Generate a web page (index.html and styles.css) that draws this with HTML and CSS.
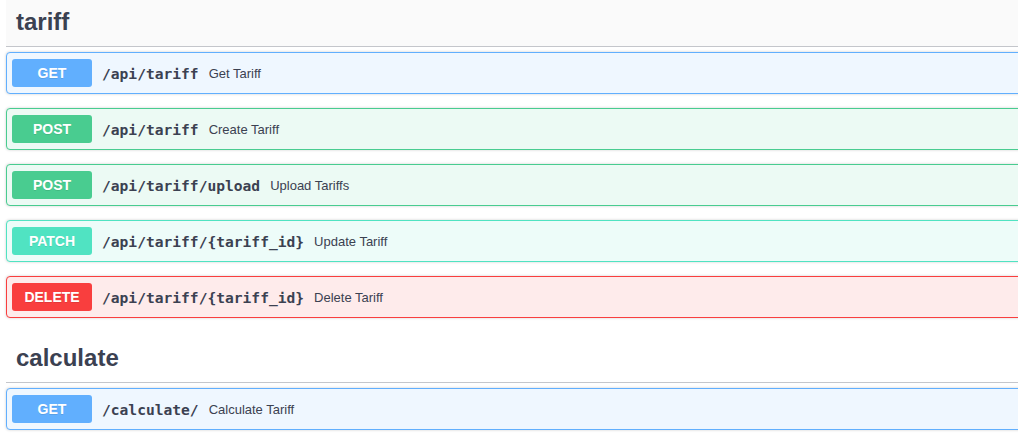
FILE: index.html
```html
<!DOCTYPE html>
<html>
<head>
<meta charset="utf-8">
<link rel="stylesheet" href="styles.css">
</head>
<body>
<div class="wrapper">
  <section class="tag-section">
    <h3 class="tag-header tag-header--hover">tariff</h3>
    <div class="opblock opblock--get">
      <span class="method">GET</span>
      <span class="path">/api/tariff</span>
      <span class="desc">Get Tariff</span>
    </div>
    <div class="opblock opblock--post">
      <span class="method">POST</span>
      <span class="path">/api/tariff</span>
      <span class="desc">Create Tariff</span>
    </div>
    <div class="opblock opblock--post">
      <span class="method">POST</span>
      <span class="path">/api/tariff/upload</span>
      <span class="desc">Upload Tariffs</span>
    </div>
    <div class="opblock opblock--patch">
      <span class="method">PATCH</span>
      <span class="path">/api/tariff/{tariff_id}</span>
      <span class="desc">Update Tariff</span>
    </div>
    <div class="opblock opblock--delete">
      <span class="method">DELETE</span>
      <span class="path">/api/tariff/{tariff_id}</span>
      <span class="desc">Delete Tariff</span>
    </div>
  </section>
  <section class="tag-section">
    <h3 class="tag-header">calculate</h3>
    <div class="opblock opblock--get">
      <span class="method">GET</span>
      <span class="path">/calculate/</span>
      <span class="desc">Calculate Tariff</span>
    </div>
  </section>
</div>
</body>
</html>
```

FILE: styles.css
```css
html, body {
  margin: 0;
  padding: 0;
  background: #fff;
  overflow: hidden;
}

body {
  font-family: "Liberation Sans", Arial, sans-serif;
  color: #3b4151;
}

.wrapper {
  padding-left: 6px;
  margin-right: -30px;
}

.tag-section {
  padding-bottom: 4px;
}

.tag-header {
  margin: 0 0 5px;
  height: 46px;
  line-height: 44px;
  padding: 0 0 0 10px;
  font-size: 24px;
  font-weight: bold;
  color: #3b4151;
  border-bottom: 1px solid #c4c6cb;
}

.tag-header--hover {
  background: #fafafa;
}

.opblock {
  display: flex;
  align-items: center;
  height: 40px;
  padding: 0 5px;
  margin-bottom: 14px;
  border: 1px solid;
  border-radius: 4px;
  box-shadow: 0 0 3px rgba(0, 0, 0, 0.19);
}

.method {
  flex: none;
  width: 80px;
  height: 28px;
  line-height: 28px;
  text-align: center;
  border-radius: 3px;
  color: #fff;
  font-size: 14px;
  font-weight: bold;
  text-shadow: 0 1px 0 rgba(0, 0, 0, 0.1);
}

.path {
  padding: 0 10px;
  font-family: "DejaVu Sans Mono", "Liberation Mono", monospace;
  font-weight: bold;
  font-size: 14.6px;
  color: #3b4151;
}

.desc {
  font-size: 13px;
  color: #3b4151;
}

.opblock--get { background: #eff7ff; border-color: #61affe; }
.opblock--get .method { background: #61affe; }

.opblock--post { background: #ecfaf4; border-color: #49cc90; }
.opblock--post .method { background: #49cc90; }

.opblock--patch { background: #edfcf9; border-color: #50e3c2; }
.opblock--patch .method { background: #50e3c2; }

.opblock--delete { background: #feebeb; border-color: #f93e3e; }
.opblock--delete .method { background: #f93e3e; }
```
